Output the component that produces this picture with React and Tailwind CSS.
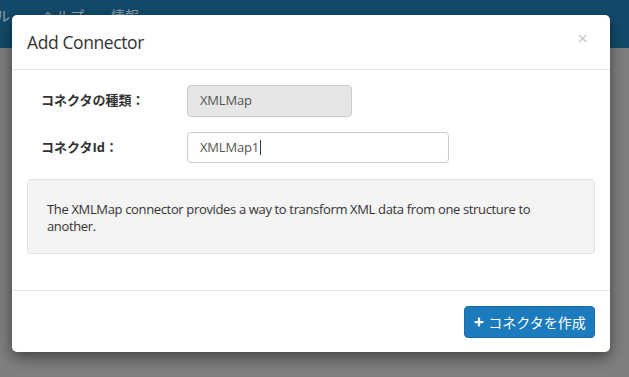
import { Plus } from "lucide-react";

const jp = { fontFamily: '"Segoe UI", "Open Sans", "Noto Sans CJK JP", sans-serif' };

export default function App() {
  return (
    <div className="relative h-[377px] w-[629px] overflow-hidden bg-[#7f7f7f]" style={jp}>
      {/* ナビバー（オーバーレイ越し） */}
      <div className="flex h-[48px] items-start overflow-hidden bg-[#134a6b] pt-[5px] text-[14px] text-[#8ea6b8]">
        <span className="-ml-[32px] w-[74px] shrink-0">ツール</span>
        <span className="w-[69px] shrink-0">ヘルプ</span>
        <span>情報</span>
      </div>

      {/* MODAL */}
      <div className="absolute left-[12px] top-[15px] w-[598px] rounded-[5px] bg-white shadow-[0_5px_15px_rgba(0,0,0,0.5)]">
        <div className="flex h-[55px] items-center justify-between border-b border-[#e5e5e5] px-[15px]">
          <h4 className="text-[17.5px] tracking-[-0.4px] text-[#333]">Add Connector</h4>
          <span className="mr-[7px] mb-[8px] text-[19px] leading-none text-[#c8c8c8]">×</span>
        </div>

        <div className="px-[15px] pt-[15px] pb-[36px]">
          <div className="flex h-[32px] items-center">
            <label className="w-[160px] pl-[14px] text-[13px] font-bold text-[#333]">コネクタの種類：</label>
            <div className="flex h-[32px] w-[165px] items-center rounded-[4px] border border-[#cccccc] bg-[#e6e6e6] px-[12px] text-[13px] tracking-[-0.2px] text-[#555]">
              XMLMap
            </div>
          </div>
          <div className="mt-[15px] flex h-[31px] items-center">
            <label className="w-[160px] pl-[14px] text-[13px] font-bold text-[#333]">コネクタId：</label>
            <div className="flex h-[31px] w-[262px] items-center rounded-[4px] border border-[#cccccc] bg-white px-[12px] text-[13px] tracking-[-0.2px] text-[#555]">
              XMLMap1<span className="ml-[1px] h-[15px] w-px bg-[#333]" />
            </div>
          </div>
          <div className="mt-[16px] h-[75px] rounded-[4px] border border-[#e3e3e3] bg-[#f4f4f4] px-[19px] pt-[21px] text-[13px] leading-[17px] tracking-[-0.35px] text-[#333]">
            The XMLMap connector provides a way to transform XML data from one structure to another.
          </div>
        </div>

        <div className="flex h-[62px] items-start justify-end border-t border-[#e5e5e5] px-[15px] pt-[15px]">
          <button className="flex h-[32px] w-[131px] items-center justify-center gap-[3px] rounded-[4px] border border-[#1a6ea8] bg-[#1b7bbd] text-[14px] text-white">
            <Plus size={12} strokeWidth={4.5} />
            コネクタを作成
          </button>
        </div>
      </div>
    </div>
  );
}
